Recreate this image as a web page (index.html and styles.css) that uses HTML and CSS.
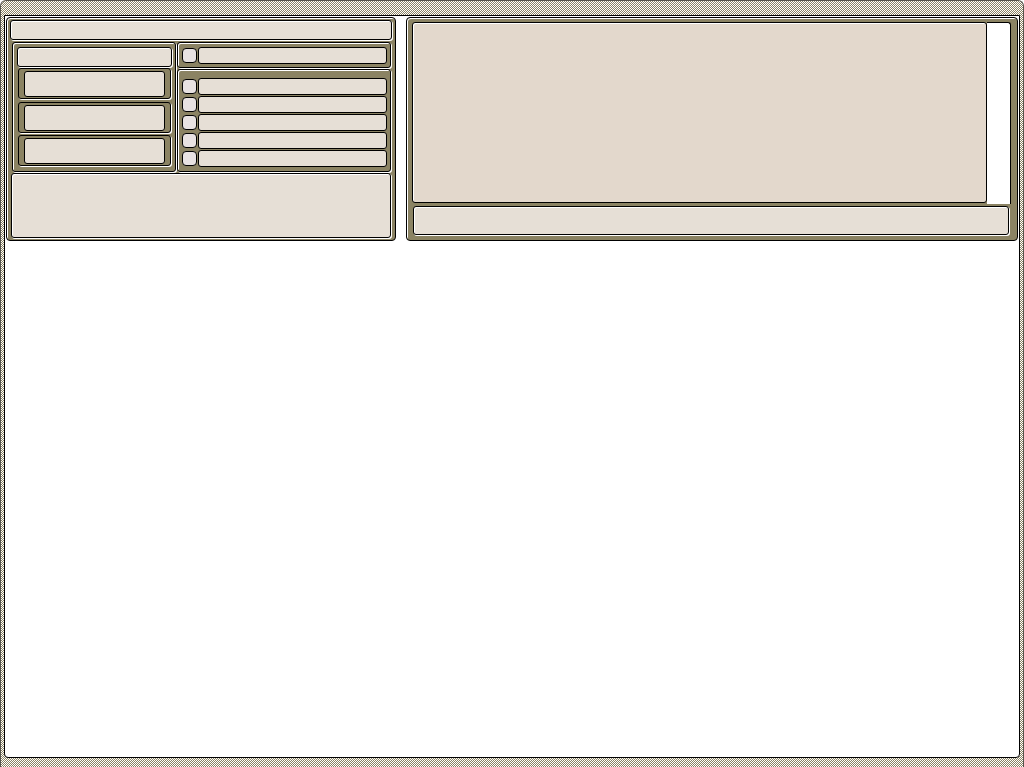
FILE: index.html
```html
<!DOCTYPE html>
<html lang="en">
<head>
<meta charset="utf-8">
<title>Workspace</title>
<link rel="stylesheet" href="styles.css">
</head>
<body>
<div class="screen">
  <div class="window">
    <div class="top-row">
      <section class="panel panel-left">
        <div class="field titlebar"></div>
        <div class="mid">
          <div class="frame list-box">
            <div class="field list-head"></div>
            <div class="btn btn-first"><div class="btn-face"></div></div>
            <div class="btn btn-second"><div class="btn-face"></div></div>
            <div class="btn btn-third"><div class="btn-face"></div></div>
          </div>
          <div class="right-col">
            <div class="frame opt-box">
              <div class="row"><span class="check"></span><span class="field line"></span></div>
            </div>
            <div class="frame rows-box">
              <div class="row"><span class="check"></span><span class="field line"></span></div>
              <div class="row"><span class="check"></span><span class="field line"></span></div>
              <div class="row"><span class="check"></span><span class="field line"></span></div>
              <div class="row"><span class="check"></span><span class="field line"></span></div>
              <div class="row"><span class="check"></span><span class="field line"></span></div>
            </div>
          </div>
        </div>
        <div class="field notes"></div>
      </section>
      <section class="panel panel-right">
        <div class="canvas-wrap">
          <div class="canvas"></div>
          <div class="canvas-side"></div>
        </div>
        <div class="field status"></div>
      </section>
    </div>
  </div>
</div>
</body>
</html>
```
FILE: styles.css
```css
* { box-sizing: border-box; }

html, body {
  margin: 0;
  padding: 0;
  background: #fff;
}

.screen {
  width: 1024px;
  height: 767px;
  border: 1px solid #55534b;
  border-bottom: 0;
  border-radius: 6px 6px 0 0;
  padding: 14px 3px 9px 3px;
  background: repeating-conic-gradient(#8b8363 0% 25%, #ffffff 0% 50%) 0 0 / 2px 2px;
}

.window {
  height: 100%;
  border: 1px solid #000;
  border-radius: 0 0 4px 4px;
  background: #fff;
}

.top-row {
  display: flex;
  gap: 10px;
  padding: 1px;
}

.panel {
  height: 224px;
  border: 1px solid #000;
  border-radius: 4px;
  background: #8b8363;
  box-shadow: inset 1px 1px 0 #fff;
  display: flex;
  flex-direction: column;
}

.panel-left {
  width: 390px;
  flex: none;
  padding: 2px 3px 2px 3px;
}

.panel-right {
  flex: 1;
  padding: 4px 6px 5px 5px;
}

.field {
  display: block;
  background: #e6dfd6;
  border: 1px solid #000;
  border-radius: 3px;
  box-shadow: inset 1px 1px 0 #fff, 1px 1px 0 #fff;
}

.frame {
  background: #8b8363;
  border: 1px solid #000;
  border-radius: 3px;
  box-shadow: inset 1px 1px 0 #fff, 1px 1px 0 #fff;
}

.titlebar {
  height: 20px;
}

.mid {
  display: flex;
  gap: 1px;
  margin: 2px 0 0 2px;
  height: 130px;
}

.list-box {
  width: 164px;
  height: 130px;
  padding: 4px;
  display: flex;
  flex-direction: column;
}

.list-head {
  width: 155px;
  height: 20px;
}

.btn {
  width: 153px;
  height: 31px;
  margin-left: 1px;
  padding: 2px 5px 1px 5px;
  display: flex;
  background: #8b8363;
  border: 1px solid #000;
  border-radius: 3px;
  box-shadow: 1px 1px 0 #fff;
}

.btn-first { margin-top: 1px; }
.btn-second { margin-top: 3px; }
.btn-third { margin-top: 2px; }

.btn-face {
  flex: 1;
  background: #e6dfd6;
  border: 1px solid #000;
  border-radius: 3px;
}

.right-col {
  width: 214px;
  display: flex;
  flex-direction: column;
  gap: 1px;
}

.opt-box {
  height: 26px;
  padding: 4px 3px 3px 4px;
}

.rows-box {
  height: 103px;
  padding: 8px 3px 4px 4px;
  display: flex;
  flex-direction: column;
  gap: 1px;
}

.row {
  display: flex;
  align-items: center;
  gap: 1px;
  height: 17px;
}

.check {
  width: 15px;
  height: 15px;
  flex: none;
  background: #e8e2e2;
  border: 1px solid #000;
  border-radius: 4px;
}

.line {
  width: 189px;
  height: 17px;
  box-shadow: none;
}

.notes {
  width: 380px;
  height: 65px;
  margin: 1px 0 0 1px;
}

.canvas-wrap {
  display: flex;
  height: 182px;
}

.canvas {
  width: 575px;
  height: 181px;
  background: #e3d8cc;
  border: 1px solid #000;
  border-radius: 3px;
  box-shadow: inset 1px 1px 0 #fff;
}

.canvas-side {
  flex: 1;
  background: #fff;
  border-top: 1px solid #000;
  border-right: 1px solid #000;
  border-radius: 0 3px 0 0;
}

.status {
  width: 596px;
  height: 29px;
  margin: 2px 0 0 1px;
}
```
